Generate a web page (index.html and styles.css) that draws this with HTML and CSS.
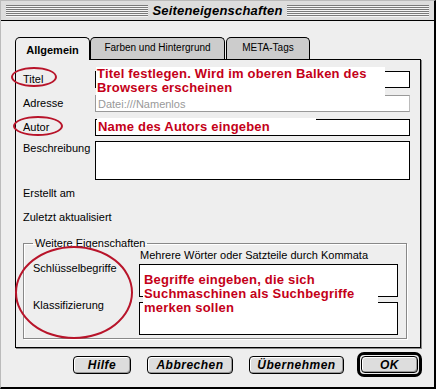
FILE: index.html
```html
<!DOCTYPE html>
<html lang="de">
<head>
    <meta charset="UTF-8">
    <title>Seiteneigenschaften</title>
    <link rel="stylesheet" href="styles.css">
</head>
<body>

    <div class="window">
        <!-- Titelleiste -->
        <div class="titlebar">
            <span class="stripes"></span>
            <span class="title">Seiteneigenschaften</span>
            <span class="stripes"></span>
        </div>

        <div class="content">
            <div class="tabs">
                <div class="tab active">Allgemein</div>
                <div class="tab tab-farben">Farben und Hintergrund</div>
                <div class="tab tab-meta">META-Tags</div>
            </div>

            <div class="panel">
                <div class="row r-titel">
                    <label>Titel</label>
                    <input class="field" type="text">
                </div>
                <div class="row r-adresse">
                    <label>Adresse</label>
                    <input class="field disabled" type="text" value="Datei:///Namenlos">
                </div>
                <div class="row r-autor">
                    <label>Autor</label>
                    <input class="field" type="text">
                </div>
                <div class="row r-beschreibung">
                    <label>Beschreibung</label>
                    <textarea class="field area"></textarea>
                </div>
                <div class="row r-info">
                    <label>Erstellt am</label>
                </div>
                <div class="row r-info r-last">
                    <label>Zuletzt aktualisiert</label>
                </div>

                <fieldset class="group">
                    <legend>Weitere Eigenschaften</legend>
                    <div class="group-grid">
                        <span></span>
                        <span class="hint">Mehrere Wörter oder Satzteile durch Kommata</span>
                        <label>Schlüsselbegriffe</label>
                        <textarea class="field small-area first"></textarea>
                        <label class="lower">Klassifizierung</label>
                        <textarea class="field small-area"></textarea>
                    </div>
                </fieldset>
            </div>

            <div class="buttons">
                <button class="btn btn-hilfe">Hilfe</button>
                <button class="btn btn-abbrechen">Abbrechen</button>
                <button class="btn btn-uebernehmen">Übernehmen</button>
                <div class="ok-ring"><button class="btn btn-ok">OK</button></div>
            </div>
        </div>
    </div>

    <!-- Anmerkungen -->
    <div class="note note-titel">Titel festlegen. Wird im oberen Balken des<br>Browsers erscheinen</div>
    <div class="note note-autor">Name des Autors eingeben</div>
    <div class="note note-keys">Begriffe eingeben, die sich<br>Suchmaschinen als Suchbegriffe<br>merken sollen</div>

    <div class="ring ring-titel"></div>
    <div class="ring ring-autor"></div>
    <div class="ring ring-group"></div>

</body>
</html>
```

FILE: styles.css
```css
* {
    box-sizing: border-box;
}

body {
    margin: 0;
    background: #fff;
    font-family: "Liberation Sans", Arial, sans-serif;
    font-size: 11px;
    color: #000;
}

label {
    white-space: nowrap;
}

/* Fenster */
.window {
    width: 436px;
    height: 389px;
    background: #eeeeee;
    border-top: 1px solid #bbb;
    border-left: 1px solid #bbb;
    border-right: 2px solid #000;
    border-bottom: 2px solid #000;
}

.titlebar {
    display: flex;
    align-items: center;
    height: 20px;
    padding: 0 5px;
    background: #dddddd;
    border-bottom: 1px solid #000;
}

.stripes {
    flex: 1;
    height: 12px;
    background: repeating-linear-gradient(#7a7a7a 0 1px, #f4f4f4 1px 2px);
}

.title {
    padding: 0 4px;
    font-size: 13px;
    font-weight: bold;
    font-style: italic;
    letter-spacing: 0.2px;
}

.content {
    padding: 16px 0 0 14px;
}

/* Reiter */
.tabs {
    display: flex;
    align-items: flex-end;
    height: 22px;
    position: relative;
    z-index: 1;
}

.tab {
    height: 22px;
    border: 1px solid #000;
    border-bottom: 0;
    border-radius: 5px 5px 0 0;
    background: #cccccc;
    font-size: 10px;
    display: flex;
    align-items: center;
    justify-content: center;
    padding-bottom: 3px;
}

.tab.active {
    width: 75px;
    height: 23px;
    margin-bottom: -1px;
    background: #eeeeee;
    font-size: 11px;
    font-weight: bold;
    padding: 2px 0 0 0;
}

.tab-farben {
    width: 135px;
}

.tab-meta {
    width: 84px;
    margin-left: 1px;
}

/* Inhalt */
.panel {
    width: 406px;
    height: 289px;
    border: 1px solid #000;
    background: #eeeeee;
    padding: 11px 10px 0 7px;
    box-shadow: 1px 1px 0 #888;
}

.row {
    display: flex;
    align-items: center;
}

.row label {
    width: 72px;
    flex: none;
    padding-bottom: 2px;
}

.r-titel,
.r-adresse {
    margin-bottom: 7px;
}

.r-autor,
.r-beschreibung {
    margin-bottom: 5px;
}

.r-beschreibung {
    align-items: flex-start;
}

.r-beschreibung label {
    padding-top: 1px;
}

.r-info {
    height: 18px;
    margin-bottom: 6px;
}

.r-last {
    margin-bottom: 11px;
}

.field {
    flex: 1;
    height: 17px;
    margin: 0;
    border: 1px solid #000;
    background: #fff;
    padding: 0 2px;
    font-family: "Liberation Sans", Arial, sans-serif;
    font-size: 11px;
    outline: none;
}

.field.disabled {
    border-color: #999;
    border-right-color: #bbb;
    color: #999;
}

.area {
    height: 39px;
    resize: none;
}

/* Weitere Eigenschaften */
.group {
    margin: 0 3px 0 0;
    border: 1px solid #888;
    padding: 0 8px 3px 9px;
    box-shadow: inset 1px 1px 0 #fff, 1px 1px 0 #fff;
}

.group legend {
    padding: 0 2px;
    line-height: 11px;
    font-size: 11px;
}

.group-grid {
    display: grid;
    grid-template-columns: 106px 259px;
}

.group-grid label {
    padding-top: 1px;
    align-self: start;
}

.group-grid label.lower {
    padding-top: 2px;
}

.hint {
    line-height: 12px;
    padding-left: 1px;
}

.small-area {
    height: 33px;
    resize: none;
    margin-top: 5px;
}

.small-area.first {
    margin-top: 3px;
}

/* Knöpfe */
.buttons {
    display: flex;
    align-items: center;
    gap: 16px;
    height: 29px;
    padding: 4px 0 0 58px;
}

.btn {
    height: 18px;
    margin: 0;
    padding: 0;
    border: 1px solid #000;
    border-radius: 4px;
    background: #dddddd;
    box-shadow: inset 1px 1px 0 #fff, inset -1px -1px 0 #999;
    font-family: "Liberation Sans", Arial, sans-serif;
    font-size: 12px;
    font-weight: bold;
    font-style: italic;
    letter-spacing: 0.5px;
    color: #000;
}

.btn-hilfe { width: 58px; }
.btn-abbrechen { width: 86px; }
.btn-uebernehmen { width: 95px; }

.ok-ring {
    margin-left: -3px;
    width: 65px;
    height: 25px;
    padding: 1px;
    border: 3px solid #000;
    border-radius: 7px;
    display: flex;
}

.btn-ok {
    width: 100%;
    height: 17px;
}

/* Anmerkungen */
.note {
    position: absolute;
    background: #fff;
    color: #c40018;
    font-size: 13px;
    font-weight: bold;
    line-height: 14px;
    letter-spacing: 0.2px;
}

.note-titel {
    left: 96px;
    top: 67px;
    width: 289px;
    height: 29px;
    padding: 0 0 0 1px;
}

.note-autor {
    left: 97px;
    top: 118px;
    width: 219px;
    height: 17px;
    padding: 1px 0 0 1px;
    line-height: 15px;
}

.note-keys {
    left: 143px;
    top: 268px;
    width: 235px;
    height: 48px;
    padding: 5px 0 0 1px;
}

.ring {
    position: absolute;
    border: 2px solid #b8142a;
    border-radius: 50%;
}

.ring-titel {
    left: 11px;
    top: 67px;
    width: 46px;
    height: 20px;
}

.ring-autor {
    left: 13px;
    top: 116px;
    width: 50px;
    height: 20px;
}

.ring-group {
    left: 15px;
    top: 246px;
    width: 118px;
    height: 93px;
}
```
